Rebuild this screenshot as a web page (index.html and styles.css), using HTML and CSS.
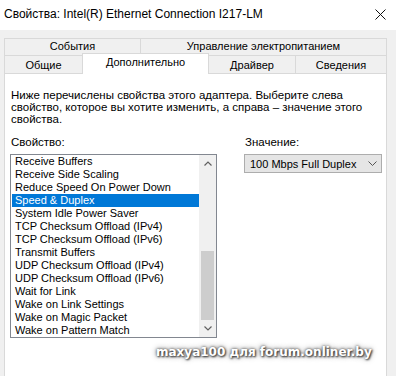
FILE: index.html
```html
<!DOCTYPE html>
<html lang="ru">
<head>
    <meta charset="UTF-8">
    <meta name="viewport" content="width=device-width, initial-scale=1.0">
    <title>Свойства: Intel(R) Ethernet Connection I217-LM</title>
    <link rel="stylesheet" href="styles.css">
</head>
<body>
    <div class="window">
        <!-- Title bar -->
        <div class="titlebar">
            <span class="title">Свойства: Intel(R) Ethernet Connection I217-LM</span>
            <svg class="close" width="11" height="11" viewBox="0 0 11 11">
                <path d="M0.5 0.5 L10.5 10.5 M10.5 0.5 L0.5 10.5" stroke="#111" stroke-width="1" fill="none"/>
            </svg>
        </div>

        <!-- Tabs -->
        <div class="tabs">
            <div class="tab-row">
                <div class="tab w-events">События</div>
                <div class="tab w-power">Управление электропитанием</div>
            </div>
            <div class="tab-row front">
                <div class="tab w-general">Общие</div>
                <div class="tab active w-advanced">Дополнительно</div>
                <div class="tab w-driver">Драйвер</div>
                <div class="tab w-details">Сведения</div>
            </div>
        </div>

        <!-- Page -->
        <div class="panel">
            <p class="intro">Ниже перечислены свойства этого адаптера. Выберите слева<br>свойство, которое вы хотите изменить, а справа – значение этого<br>свойства.</p>
            <div class="fields">
                <div class="field">
                    <div class="label">Свойство:</div>
                    <div class="listbox">
                        <ul class="items">
                            <li>Receive Buffers</li>
                            <li>Receive Side Scaling</li>
                            <li>Reduce Speed On Power Down</li>
                            <li class="selected">Speed &amp; Duplex</li>
                            <li>System Idle Power Saver</li>
                            <li>TCP Checksum Offload (IPv4)</li>
                            <li>TCP Checksum Offload (IPv6)</li>
                            <li>Transmit Buffers</li>
                            <li>UDP Checksum Offload (IPv4)</li>
                            <li>UDP Checksum Offload (IPv6)</li>
                            <li>Wait for Link</li>
                            <li>Wake on Link Settings</li>
                            <li>Wake on Magic Packet</li>
                            <li>Wake on Pattern Match</li>
                        </ul>
                        <div class="scrollbar">
                            <div class="sb-btn">
                                <svg width="8" height="5" viewBox="0 0 8 5"><path d="M0.5 4.5 L4 1 L7.5 4.5" stroke="#606060" stroke-width="1.2" fill="none"/></svg>
                            </div>
                            <div class="sb-track"><div class="sb-thumb"></div></div>
                            <div class="sb-btn">
                                <svg width="8" height="5" viewBox="0 0 8 5"><path d="M0.5 0.5 L4 4 L7.5 0.5" stroke="#606060" stroke-width="1.2" fill="none"/></svg>
                            </div>
                        </div>
                    </div>
                </div>
                <div class="field">
                    <div class="label">Значение:</div>
                    <div class="combo">
                        <span>100 Mbps Full Duplex</span>
                        <svg width="9" height="5" viewBox="0 0 9 5"><path d="M0.5 0.5 L4.5 4.5 L8.5 0.5" stroke="#555" stroke-width="1" fill="none"/></svg>
                    </div>
                </div>
            </div>
        </div>

        <div class="watermark">maxya100 для forum.onliner.by</div>
    </div>
</body>
</html>
```

FILE: styles.css
```css
body {
    margin: 0;
    background-color: #f0f0f0;
    font-family: 'Liberation Sans', Arial, sans-serif;
    font-size: 11.5px;
    color: #000;
}

.window {
    position: relative;
    height: 376px;
    display: flex;
    flex-direction: column;
    overflow: hidden;
}

.titlebar {
    height: 30px;
    background-color: #fff;
    display: flex;
    align-items: center;
    justify-content: space-between;
    padding: 0 10px 2px 4px;
    box-sizing: border-box;
}

.title {
    font-size: 12px;
}

.close {
    display: block;
}

.tabs {
    margin: 8px 0 0 4px;
    font-size: 11px;
}

.tab-row {
    display: flex;
    height: 17px;
}

.tab-row.front {
    height: 18px;
}

.tab {
    box-sizing: border-box;
    border: 1px solid #d9d9d9;
    border-bottom: none;
    margin-left: -1px;
    text-align: center;
    line-height: 15px;
    background-color: #f0f0f0;
}

.tab:first-child {
    margin-left: 0;
}

.front .tab {
    line-height: 18px;
}

.tab.active {
    position: relative;
    z-index: 1;
    background-color: #fff;
    margin-top: -2px;
    height: 21px;
    line-height: 16px;
}

.w-events { width: 137px; }
.w-power { width: 247px; }
.w-general { width: 79px; }
.w-advanced { width: 127px; }
.w-driver { width: 88px; }
.w-details { width: 92px; }

.panel {
    flex: 1;
    margin-left: 4px;
    width: 383px;
    box-sizing: border-box;
    background-color: #fff;
    border: 1px solid #d9d9d9;
    border-bottom: none;
    padding: 15px 5px 0 5px;
}

.intro {
    margin: 0 0 11px 1px;
    line-height: 12px;
}

.fields {
    display: grid;
    grid-template-columns: 207px 138px;
    column-gap: 27px;
}

.label {
    line-height: 13px;
    margin: 0 0 5px 1px;
}

.listbox {
    display: flex;
    height: 184px;
    box-sizing: border-box;
    border: 1px solid #828790;
}

.items {
    flex: 1;
    list-style: none;
    margin: 0;
    padding: 0;
    font-size: 11px;
}

.items li {
    height: 13px;
    line-height: 13px;
    margin: 0 0 0 1px;
    padding-left: 3px;
    white-space: nowrap;
}

.items li.selected {
    background-color: #0078d7;
    color: #fff;
}

.scrollbar {
    width: 17px;
    display: flex;
    flex-direction: column;
    background-color: #f0f0f0;
}

.sb-btn {
    height: 17px;
    display: flex;
    align-items: center;
    justify-content: center;
}

.sb-btn svg {
    display: block;
}

.sb-track {
    flex: 1;
    display: flex;
    flex-direction: column;
    justify-content: flex-end;
    padding: 0 2px;
}

.sb-thumb {
    height: 69px;
    background-color: #cdcdcd;
}

.combo {
    height: 19px;
    box-sizing: border-box;
    border: 1px solid #adadad;
    background-color: #e5e5e5;
    display: flex;
    align-items: center;
    justify-content: space-between;
    padding: 0 4px 0 5px;
    font-size: 11px;
}

.combo svg {
    display: block;
}

.watermark {
    position: absolute;
    left: 156px;
    top: 345px;
    font-family: 'DejaVu Sans', Verdana, sans-serif;
    font-weight: bold;
    font-size: 12px;
    color: #fff;
    text-shadow: 0 0 3px #444, 1px 1px 2px #333, 0 0 6px #888;
}
```
